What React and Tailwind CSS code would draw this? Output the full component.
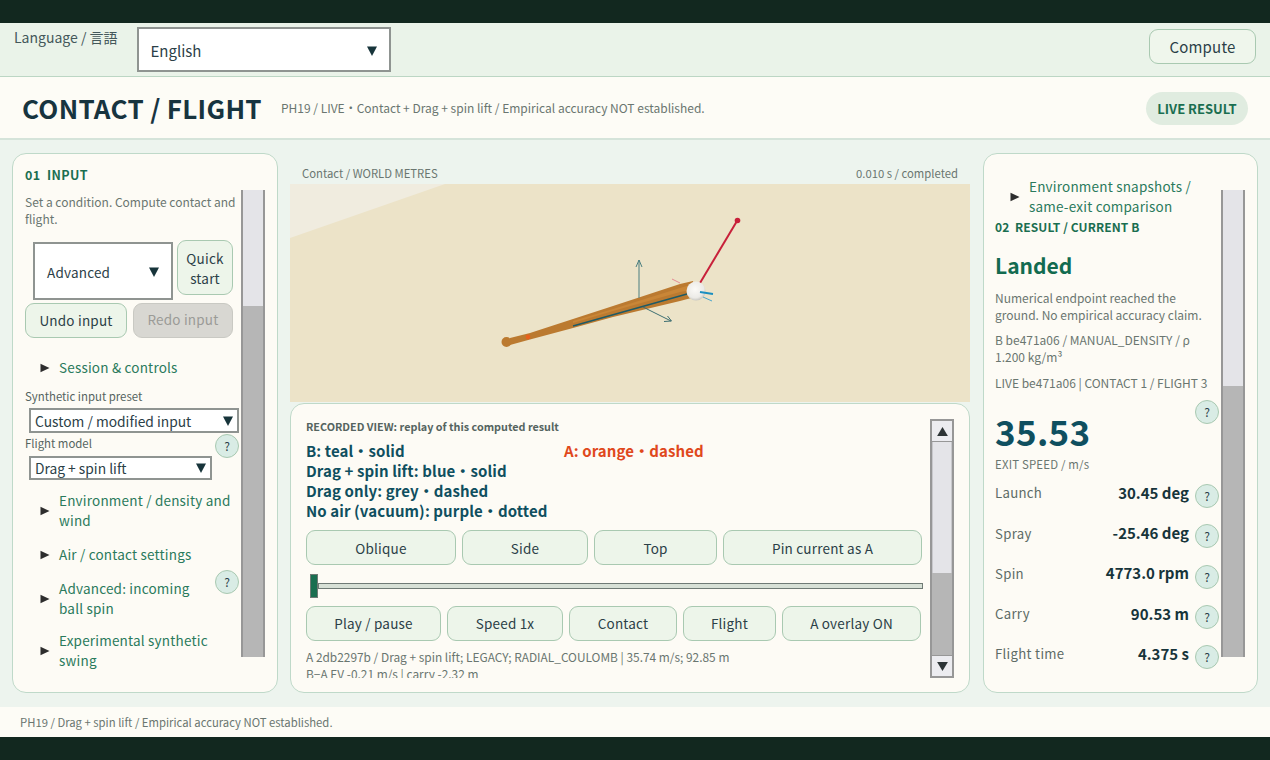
function Caret({ className = "" }) {
  return (
    <svg viewBox="0 0 12 12" className={`w-3 h-3 shrink-0 ${className}`}>
      <path d="M1 1.5h10L6 11z" fill="#17343a" />
    </svg>
  );
}

function Select({ label, className = "" }) {
  return (
    <div className={`bg-white border-2 border-[#8f9491] flex items-center justify-between text-[#2b4047] ${className}`}>
      <span>{label}</span>
      <Caret />
    </div>
  );
}

function Btn({ children, className = "" }) {
  return (
    <button className={`bg-[#edf5ea] border-[1.5px] border-[#a9c9b1] rounded-[9px] text-[13.5px] leading-[20px] text-[#2b4047] tracking-[0.2px] ${className}`}>
      {children}
    </button>
  );
}

function Help({ className = "" }) {
  return (
    <div className={`w-6 h-6 shrink-0 rounded-full bg-[#d9ece5] border-[1.5px] border-[#a9c9b1] flex items-center justify-center text-[12px] text-[#2b4047] ${className}`}>
      ?
    </div>
  );
}

function Disclosure({ children, className = "" }) {
  return (
    <div className={`flex items-center pl-[15px] text-[13.5px] leading-[20px] text-[#2a7a5c] tracking-[0.2px] ${className}`}>
      <svg viewBox="0 0 10 10" className="w-[10px] h-[10px] shrink-0 mr-[9px]">
        <path d="M0.5 0.8 9.5 5 0.5 9.2z" fill="#2d2d2d" />
      </svg>
      <div className="-translate-y-px">{children}</div>
    </div>
  );
}

function Scrollbar({ lightH, className = "" }) {
  return (
    <div className={`w-6 shrink-0 border-x-2 border-[#979797] bg-[#b6b6b6] ${className}`}>
      <div className="bg-[#e4e4e8]" style={{ height: lightH }} />
    </div>
  );
}

function Stat({ label, value }) {
  return (
    <div className="flex items-center h-[40.3px]">
      <span className="flex-1 text-[13.2px] text-[#5d6b66] tracking-[0.3px]">{label}</span>
      <span className="text-[15px] font-bold text-[#17343a]">{value}</span>
      <Help className="ml-[6px] mt-[6px]" />
    </div>
  );
}

function BatScene() {
  return (
    <svg viewBox="0 0 680 218" className="w-full h-full block">
      <defs>
        <radialGradient id="ball" cx="0.45" cy="0.4" r="0.65">
          <stop offset="0" stopColor="#fbfaf7" />
          <stop offset="0.7" stopColor="#ecebe7" />
          <stop offset="1" stopColor="#bdbcb6" />
        </radialGradient>
      </defs>
      <polygon points="0,0 155,0 0,54" fill="#f0ecdf" />
      <g transform="translate(-290 -184)">
        <path d="M510 338 L530 333 L573 319 L613 306 L680 284 L693 281 L695 297 L680 301 L613 317 L573 328 L530 339.5 L510 345z" fill="#bb7a30" />
        <path d="M573 321 L613 309 L680 288 L690 285 L691 290 L680 292 L613 311 L573 323z" fill="#c98637" />
        <circle cx="506.5" cy="342" r="5" fill="#bb7a30" />
        <circle cx="528" cy="337" r="2.4" fill="#e8601c" />
        <line x1="573" y1="326" x2="687" y2="294" stroke="#1d5a66" strokeWidth="1.4" />
        <path d="M639 298V260M636 267l3-7 3 7" fill="none" stroke="#4b7f80" strokeWidth="1" />
        <path d="M643 307 671 321M664 321.5l7.5-.5-4-5" fill="none" stroke="#3e6f72" strokeWidth="1" />
        <line x1="672" y1="279" x2="680" y2="283" stroke="#e58a92" strokeWidth="1" />
        <line x1="700" y1="283" x2="737" y2="221" stroke="#c8203a" strokeWidth="2" />
        <circle cx="737.5" cy="220.5" r="2.8" fill="#c8203a" />
        <circle cx="696" cy="291" r="9.5" fill="url(#ball)" />
        <line x1="700" y1="292" x2="713" y2="294" stroke="#1a8fc0" strokeWidth="2" />
        <line x1="703" y1="297" x2="712" y2="301" stroke="#4ba6cc" strokeWidth="1" />
      </g>
    </svg>
  );
}

export default function App() {
  return (
    <div className="w-[1270px] h-[760px] overflow-hidden flex flex-col bg-[#edf4ee] font-['Noto_Sans_CJK_JP','Noto_Sans',sans-serif]">
      <div className="h-[23px] bg-[#12281f] shrink-0" />

      <div className="h-[54px] shrink-0 bg-[#eaf3e9] border-b border-[#bcd6c4] flex items-start pl-[14px] pr-[14px]">
        <span className="text-[14px] leading-[20px] text-[#44585a] mt-[4px]">Language / 言語</span>
        <Select label="English" className="w-[254px] h-[45px] ml-[19px] mt-[4px] pl-[12px] pr-[11px] pt-[3px] text-[15px]" />
        <Btn className="ml-auto mt-[6px] w-[107px] h-[35px] !text-[15px] bg-[#eff6ec]">Compute</Btn>
      </div>

      <div className="h-[63px] shrink-0 bg-[#fdfcf6] border-b-2 border-[#d5e4da] flex items-center pl-[22px] pr-[22px]">
        <h1 className="text-[26px] font-bold text-[#17343f] tracking-[0.3px]">CONTACT / FLIGHT</h1>
        <p className="ml-[19px] mt-[1px] text-[12px] text-[#6a7670]">PH19 / LIVE・Contact + Drag + spin lift / Empirical accuracy NOT established.</p>
        <span className="ml-auto mt-[2px] w-[102px] h-[33px] rounded-full bg-[#e0ece0] flex items-center justify-center text-[13px] font-bold text-[#1a6e50]">LIVE RESULT</span>
      </div>

      <div className="flex-1 grid grid-cols-[266px_680px_276px] gap-x-[12px] pl-[12px] pt-[13px] pb-[14px] min-h-0">
        {/* input */}
        <section className="bg-[#fdfbf5] border border-[#bfd9c9] rounded-[14px] pl-[12px] pt-[12px] flex min-h-0 overflow-hidden">
          <div className="w-[214px] shrink-0">
            <h2 className="text-[12.5px] leading-[18px] font-bold text-[#1a6e50] tracking-[0.4px] whitespace-pre">01  INPUT</h2>
            <p className="mt-[9px] text-[12px] leading-[17px] text-[#6a7670]">Set a condition. Compute contact and flight.</p>
            <div className="flex mt-[13px]">
              <Select label="Advanced" className="w-[140px] h-[58px] ml-[8px] mt-[2px] pl-[12px] pr-[11px] pt-[2px] text-[13.5px] tracking-[0.2px]" />
              <Btn className="w-[56px] h-[55px] ml-[4px]">Quick start</Btn>
            </div>
            <div className="flex gap-[6px] mt-[3px]">
              <Btn className="w-[102px] h-[35px] pb-[2px]">Undo input</Btn>
              <button className="w-[100px] h-[35px] pb-[2px] rounded-[9px] border-[1.5px] border-[#c9c9c3] bg-[#d8d7d2] text-[13.5px] text-[#9b9b97] tracking-[0.2px]">Redo input</button>
            </div>
            <Disclosure className="mt-[20px]">Session &amp; controls</Disclosure>
            <div className="mt-[10px] text-[11.4px] leading-[17px] text-[#55645f]">Synthetic input preset</div>
            <Select label="Custom / modified input" className="w-[210px] h-[25px] ml-[4px] mt-[3px] pl-[4px] pr-[3px] pt-[1px] text-[13.8px]" />
            <div className="flex justify-between">
              <div>
                <div className="mt-[2px] text-[11.4px] leading-[17px] text-[#55645f]">Flight model</div>
                <Select label="Drag + spin lift" className="w-[183px] h-[24px] ml-[4px] mt-[4px] pl-[4px] pr-[3px] text-[13.8px]" />
              </div>
              <Help className="mt-[1px]" />
            </div>
            <Disclosure className="mt-[11px]">Environment / density and wind</Disclosure>
            <Disclosure className="mt-[14px]">Air / contact settings</Disclosure>
            <div className="flex justify-between mt-[14px]">
              <Disclosure className="w-[172px]">Advanced: incoming ball spin</Disclosure>
              <Help className="-mt-[9px]" />
            </div>
            <Disclosure className="mt-[12px] w-[200px]">Experimental synthetic swing</Disclosure>
          </div>
          <Scrollbar lightH={116} className="h-[467px] mt-[24px] ml-[2px]" />
        </section>

        {/* viewport + replay */}
        <section className="flex flex-col min-h-0">
          <div className="flex justify-between h-[31px] px-[12px] pt-[11px] text-[11.3px] leading-[18px] text-[#6a7670]">
            <span>Contact / WORLD METRES</span>
            <span>0.010 s / completed</span>
          </div>
          <div className="h-[218px] bg-[#ece3c8] shrink-0">
            <BatScene />
          </div>
          <div className="flex-1 min-h-0 mt-px bg-[#fdfbf5] border border-[#bfd9c9] rounded-[14px] pl-[15px] pr-[16px] flex overflow-hidden">
            <div className="w-[617px] shrink-0 pt-[14px] h-[274px] overflow-hidden">
              <div className="text-[10.8px] leading-[17px] font-bold text-[#55645f]">RECORDED VIEW: replay of this computed result</div>
              <div className="mt-[6px] grid grid-cols-[258px_1fr] text-[15px] leading-[20px] font-bold text-[#0f4f5f] tracking-[0.1px]">
                <div>B: teal・solid</div>
                <div className="text-[#e0481c]">A: orange・dashed</div>
                <div className="col-span-2">Drag + spin lift: blue・solid</div>
                <div className="col-span-2">Drag only: grey・dashed</div>
                <div className="col-span-2">No air (vacuum): purple・dotted</div>
              </div>
              <div className="flex gap-[6px] mt-[9px]">
                <Btn className="w-[150px] h-[35px]">Oblique</Btn>
                <Btn className="w-[126px] h-[35px]">Side</Btn>
                <Btn className="w-[123px] h-[35px]">Top</Btn>
                <Btn className="w-[199px] h-[35px]">Pin current as A</Btn>
              </div>
              <div className="flex items-center h-[24px] mt-[9px] pl-[4px]">
                <div className="w-[8px] h-[24px] bg-[#1a6e50] border border-[#6f7a75] shrink-0" />
                <div className="flex-1 h-[6px] bg-[#d7e0d6] border border-[#6f7a75]" />
              </div>
              <div className="flex gap-[6px] mt-[8px]">
                <Btn className="w-[135px] h-[35px] pb-[2px]">Play / pause</Btn>
                <Btn className="w-[116px] h-[35px] pb-[2px]">Speed 1x</Btn>
                <Btn className="w-[108px] h-[35px] pb-[2px]">Contact</Btn>
                <Btn className="w-[93px] h-[35px] pb-[2px]">Flight</Btn>
                <Btn className="w-[139px] h-[35px] pb-[2px]">A overlay ON</Btn>
              </div>
              <div className="mt-[7px] text-[11.9px] leading-[17px] text-[#6a7670]">
                A 2db2297b / Drag + spin lift; LEGACY; RADIAL_COULOMB | 35.74 m/s; 92.85 m
                <br />
                B−A EV -0.21 m/s | carry -2.32 m
              </div>
            </div>
            <div className="w-[24px] h-[259px] mt-[15px] ml-[7px] shrink-0 border-2 border-[#979797] bg-[#b6b6b6] flex flex-col">
              <div className="h-[21px] bg-[#ececf0] border-b border-[#979797] flex items-center justify-center shrink-0">
                <svg viewBox="0 0 12 10" className="w-[11px] h-[9px]"><path d="M6 0l6 10H0z" fill="#2d3436" /></svg>
              </div>
              <div className="h-[131px] bg-[#e4e4e8] border-x border-[#c8c8cc]" />
              <div className="flex-1" />
              <div className="h-[21px] bg-[#ececf0] border-t border-[#979797] flex items-center justify-center shrink-0">
                <svg viewBox="0 0 12 10" className="w-[11px] h-[9px]"><path d="M0 0h12L6 10z" fill="#2d3436" /></svg>
              </div>
            </div>
          </div>
        </section>

        {/* result */}
        <section className="ml-px bg-[#fdfbf5] border border-[#bfd9c9] rounded-[14px] pl-[11px] pt-[23px] flex min-h-0 overflow-hidden">
          <div className="w-[224px] shrink-0">
            <Disclosure className="w-[205px]">Environment snapshots / same-exit comparison</Disclosure>
            <h2 className="text-[12px] leading-[20px] font-bold text-[#1a6e50] tracking-[0.1px] whitespace-pre">02  RESULT / CURRENT B</h2>
            <div className="mt-[12px] text-[21px] leading-[32px] font-bold text-[#126b50]">Landed</div>
            <p className="mt-[8px] w-[214px] text-[12px] leading-[17px] text-[#6a7670]">Numerical endpoint reached the ground. No empirical accuracy claim.</p>
            <p className="mt-[8px] w-[214px] text-[12px] leading-[17px] text-[#6a7670]">B be471a06 / MANUAL_DENSITY / ρ 1.200 kg/m³</p>
            <p className="mt-[9px] text-[12px] leading-[17px] text-[#6a7670] whitespace-nowrap">LIVE be471a06 | CONTACT 1 / FLIGHT 3</p>
            <div className="flex justify-end mt-[9px]">
              <Help />
            </div>
            <div className="-mt-[15px] mb-[2px] text-[35px] leading-[44px] font-bold text-[#0f4f5f] tracking-[0.3px]">35.53</div>
            <div className="text-[11.4px] leading-[18px] text-[#6a7670] tracking-[0.2px]">EXIT SPEED / m/s</div>
            <div>
              <Stat label="Launch" value="30.45 deg" />
              <Stat label="Spray" value="-25.46 deg" />
              <Stat label="Spin" value="4773.0 rpm" />
              <Stat label="Carry" value="90.53 m" />
              <Stat label="Flight time" value="4.375 s" />
            </div>
          </div>
          <Scrollbar lightH={196} className="h-[467px] mt-[13px] ml-[2px]" />
        </section>
      </div>

      <div className="h-[30px] shrink-0 bg-[#fdfcf6] flex items-center pl-[20px] text-[11.3px] text-[#6a7670]">
        PH19 / Drag + spin lift / Empirical accuracy NOT established.
      </div>
      <div className="h-[23px] bg-[#12281f] shrink-0" />
    </div>
  );
}
